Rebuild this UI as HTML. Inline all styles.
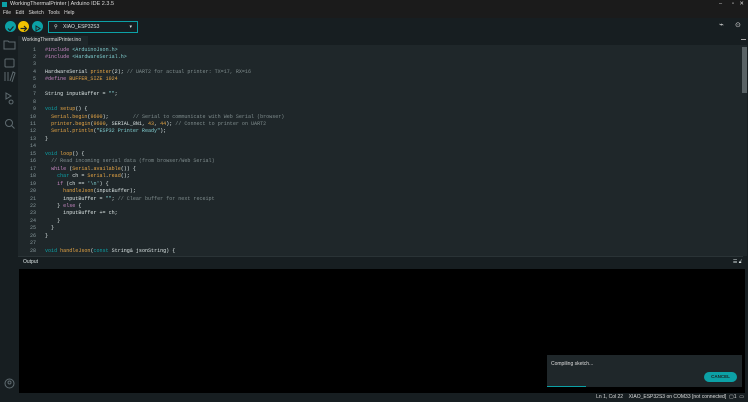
<!DOCTYPE html>
<html><head><style>
*{margin:0;padding:0;box-sizing:border-box}
body{width:748px;height:402px;background:#171e21;font-family:"Liberation Sans",sans-serif;overflow:hidden;position:relative;color:#dae3e3}
.abs{position:absolute}
#title{left:0;top:0;width:748px;height:9px;background:#1b1b1b;font-size:5.5px;line-height:9px;padding-left:10px;color:#ddd}
#menu{left:0;top:9px;width:748px;height:9px;background:#1b1b1b;font-size:5px;line-height:9px;padding-left:3px;color:#ddd;word-spacing:3px}
#tool{left:0;top:18px;width:748px;height:18px;background:#171e21}
.btn{position:absolute;top:21px;width:11px;height:11px;border-radius:50%}
#side{left:0;top:36px;width:18px;height:357px;background:#171e21}
#editor{left:18px;top:45px;width:725px;height:211px;background:#1f272a}
#tabs{left:18px;top:36px;width:730px;height:9px;background:#171e21}
#code{left:15px;top:46.5px;font-family:"Liberation Mono",monospace;font-size:5.05px;line-height:7.45px;white-space:pre;color:#dae3e3}
.ln{display:inline-block;width:21px;text-align:right;color:#8a9a9e;margin-right:9px}
.k{color:#c586c0}.o{color:#e5a444}.c{color:#7f8c8d}.t{color:#0ca1a6}.s{color:#7fcbcd}
#outh{left:18px;top:256px;width:730px;height:13px;background:#171e21;font-size:5px;line-height:13px;padding-left:5px}
#out{left:19px;top:269px;width:726px;height:124px;background:#000}
#status{left:0;top:393px;width:748px;height:9px;background:#171e21;font-size:5px;line-height:9px;color:#ddd}
#toast{left:547px;top:355px;width:195px;height:32px;background:#1f272a}
</style></head><body>
<div class="abs" id="title"><span style="position:absolute;left:2px;top:2px;width:5px;height:5px;background:#0ca1a6"></span>WorkingThermalPrinter | Arduino IDE 2.3.5
<span style="position:absolute;right:26px;top:0">–</span><span style="position:absolute;right:14px;top:0">▫</span><span style="position:absolute;right:4px;top:0">✕</span></div>
<div class="abs" id="menu">File Edit Sketch Tools Help</div>
<div class="abs" id="tool"></div>
<div class="btn" style="left:5px;background:#0ca1a6"><svg width="11" height="11"><path d="M3 5.5l2 2 3.5-4" stroke="#1b2426" stroke-width="1.2" fill="none"/></svg></div>
<div class="btn" style="left:18px;background:#f2c200"><svg width="11" height="11"><path d="M2.5 5.5h6M6 3l2.5 2.5L6 8" stroke="#1b2426" stroke-width="1.2" fill="none"/></svg></div>
<div class="btn" style="left:32px;background:#0ca1a6"><svg width="11" height="11"><path d="M4 3l4 2.5-4 2.5z" stroke="#1b2426" stroke-width="1" fill="none"/></svg></div>
<div class="abs" style="left:48px;top:21px;width:90px;height:12px;border:1px solid #0ca1a6;background:#171e21;font-size:5px;line-height:10px;padding-left:14px">XIAO_ESP32S3<span style="position:absolute;right:5px;font-size:5px">▾</span><span style="position:absolute;left:5px">⚲</span></div>
<div class="abs" style="left:719px;top:20px;font-size:8px;color:#ddd">⌁</div>
<div class="abs" style="left:735px;top:21px;font-size:7px;color:#ddd">⊙</div>
<div class="abs" id="side"></div>
<svg class="abs" style="left:3px;top:38px" width="13" height="100" fill="none" stroke="#5f6b70" stroke-width="1">
<path d="M1 3h4l1 1h6v7H1z"/><rect x="2" y="21" width="9" height="8" rx="1"/><path d="M2 43v-9M5 43v-9M7 43l3-9 2 1-3 9"/><path d="M3 61v-6l5 3z M8 62a2 2 0 1 0 .1 0"/><circle cx="6" cy="85" r="3.5"/><path d="M8.5 87.5l3 3"/></svg>
<svg class="abs" style="left:4px;top:378px" width="11" height="11" fill="none" stroke="#5f6b70"><circle cx="5.5" cy="5.5" r="4.5"/><circle cx="5.5" cy="4.5" r="1.5"/></svg>
<div class="abs" id="tabs"><div style="position:absolute;left:0;top:0;height:9px;width:70px;background:#1f272a;font-size:5px;line-height:9px;padding-left:4px;color:#ddd">WorkingThermalPrinter.ino</div><div style="position:absolute;right:2px;top:3px;width:5px;height:1px;background:#aaa"></div></div>
<div class="abs" id="editor"></div>
<div class="abs" style="left:742px;top:45px;width:5px;height:211px;background:#1f272a"><div style="margin-top:2px;height:46px;background:#5a6366"></div></div>
<div class="abs" id="code"><span class="ln">1</span><span class="k">#include</span> <span class="s">&lt;ArduinoJson.h&gt;</span>
<span class="ln">2</span><span class="k">#include</span> <span class="s">&lt;HardwareSerial.h&gt;</span>
<span class="ln">3</span>
<span class="ln">4</span>HardwareSerial <span class="o">printer</span>(2); <span class="c">// UART2 for actual printer: TX=17, RX=16</span>
<span class="ln">5</span><span class="k">#define</span> <span class="o">BUFFER_SIZE</span> <span class="o">1024</span>
<span class="ln">6</span>
<span class="ln">7</span>String inputBuffer = <span class="s">""</span>;
<span class="ln">8</span>
<span class="ln">9</span><span class="t">void</span> <span class="o">setup</span>() {
<span class="ln">10</span>  <span class="o">Serial</span>.<span class="o">begin</span>(<span class="o">9600</span>);        <span class="c">// Serial to communicate with Web Serial (browser)</span>
<span class="ln">11</span>  <span class="o">printer</span>.<span class="o">begin</span>(<span class="o">9600</span>, SERIAL_8N1, <span class="o">43</span>, <span class="o">44</span>); <span class="c">// Connect to printer on UART2</span>
<span class="ln">12</span>  <span class="o">Serial</span>.<span class="o">println</span>(<span class="s">"ESP32 Printer Ready"</span>);
<span class="ln">13</span>}
<span class="ln">14</span>
<span class="ln">15</span><span class="t">void</span> <span class="o">loop</span>() {
<span class="ln">16</span>  <span class="c">// Read incoming serial data (from browser/Web Serial)</span>
<span class="ln">17</span>  <span class="k">while</span> (<span class="o">Serial</span>.<span class="o">available</span>()) {
<span class="ln">18</span>    <span class="t">char</span> ch = <span class="o">Serial</span>.<span class="o">read</span>();
<span class="ln">19</span>    <span class="k">if</span> (ch == <span class="s">'\n'</span>) {
<span class="ln">20</span>      <span class="o">handleJson</span>(inputBuffer);
<span class="ln">21</span>      inputBuffer = <span class="s">""</span>; <span class="c">// Clear buffer for next receipt</span>
<span class="ln">22</span>    } <span class="k">else</span> {
<span class="ln">23</span>      inputBuffer += ch;
<span class="ln">24</span>    }
<span class="ln">25</span>  }
<span class="ln">26</span>}
<span class="ln">27</span>
<span class="ln">28</span><span class="t">void</span> <span class="o">handleJson</span>(<span class="t">const</span> String&amp; jsonString) {</div>
<div class="abs" id="outh">Output<span style="position:absolute;right:6px;top:0;font-size:5px">☰ 🔓︎</span></div>
<div class="abs" style="left:18px;top:256px;width:725px;height:1px;background:#2a3336"></div>
<div class="abs" id="out"></div>
<div class="abs" id="toast"><div style="position:absolute;left:4px;top:6px;font-size:5px;color:#ddd">Compiling sketch...</div>
<div style="position:absolute;right:5px;top:17px;width:33px;height:10px;border-radius:5px;background:#0ca1a6;color:#1b2426;font-size:4.5px;font-weight:bold;text-align:center;line-height:10px">CANCEL</div>
<div style="position:absolute;left:0;bottom:0;width:39px;height:1px;background:#0ca1a6"></div></div>
<div class="abs" id="status"><span style="position:absolute;right:4px">Ln 1, Col 22&nbsp;&nbsp;&nbsp;&nbsp;XIAO_ESP32S3 on COM33 [not connected]&nbsp;&nbsp;▢1&nbsp;&nbsp;▭</span></div>
</body></html>
